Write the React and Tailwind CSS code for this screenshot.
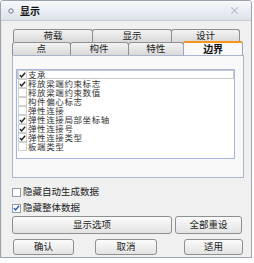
import React from 'react'

const font = { fontFamily: '"Noto Sans CJK SC", "Noto Sans", sans-serif' }

const items = [
  { label: '支承', on: true },
  { label: '释放梁端约束标志', on: true },
  { label: '释放梁端约束数值', on: false },
  { label: '构件偏心标志', on: false },
  { label: '弹性连接', on: false },
  { label: '弹性连接局部坐标轴', on: true },
  { label: '弹性连接号', on: true },
  { label: '弹性连接类型', on: true },
  { label: '板端类型', on: false },
]

function Check({ color = '#222' }) {
  return (
    <svg width="8" height="8" viewBox="0 0 8 8">
      <path d="M1 4 L3 6.2 L7 1.5" fill="none" stroke={color} strokeWidth="1.6" />
    </svg>
  )
}

function Button({ w, children }) {
  return (
    <button className={`${w} h-[16px] flex items-center justify-center rounded-[3px] border border-[#8e8f8f] bg-gradient-to-b from-[#fbfbfb] to-[#e3e3e3] text-[9.5px] leading-none text-[#222]`}>
      {children}
    </button>
  )
}

export default function App() {
  return (
    <div className="w-[254px] h-[263px] bg-white" style={font}>
      <div className="w-[252px] h-[258px] border border-[#9aa3ad] rounded-t-[3px] flex flex-col overflow-hidden">
        {/* Title bar */}
        <div className="h-[20px] shrink-0 flex items-center px-[7px] bg-gradient-to-b from-[#f7f9fb] to-[#dde3ea] border-b border-[#c5ccd4]">
          <svg width="6" height="6" viewBox="0 0 6 6" className="mr-[6px]">
            <circle cx="3" cy="3" r="2.2" fill="none" stroke="#777" strokeWidth="1" />
          </svg>
          <span className="text-[10px] font-bold text-[#111] leading-none">显示</span>
          <span className="ml-auto mr-[4px] text-[11px] leading-none text-[#a9b0b8]">×</span>
        </div>

        {/* Body */}
        <div className="flex-1 bg-[#f0f0f0] pl-[10px] pr-[8px] pt-[8px] flex flex-col border-l border-[#e5e5e5]">
          {/* Back tab row */}
          <div className="flex pl-[1px] h-[13px]">
            {[['荷载', 'w-[80px]'], ['显示', 'w-[80px]'], ['设计', 'w-[69px]']].map(([t, w]) => (
              <div key={t} className={`${w} h-[13px] -mr-[1px] border border-b-0 border-[#8e8f8f] rounded-t-[3px] bg-gradient-to-b from-[#f3f3f3] to-[#d9d9d9] flex items-center justify-center text-[9.5px] leading-none text-[#222]`}>
                {t}
              </div>
            ))}
          </div>
          {/* Front tab row */}
          <div className="flex h-[13px] relative z-10">
            {[['点', 'w-[59px]'], ['构件', 'w-[59px]'], ['特性', 'w-[57px]']].map(([t, w]) => (
              <div key={t} className={`${w} h-[13px] -mr-[1px] border border-b-0 border-[#8e8f8f] rounded-t-[3px] bg-gradient-to-b from-[#f3f3f3] to-[#d9d9d9] flex items-center justify-center text-[9.5px] leading-none text-[#222]`}>
                {t}
              </div>
            ))}
            <div className="w-[60px] h-[14px] -mt-[1px] border border-b-0 border-[#9aa3c0] border-t-2 border-t-[#f7941d] rounded-t-[2px] bg-[#f9f9f9] flex items-center justify-center text-[10px] font-bold leading-none text-[#111]">
              边界
            </div>
          </div>
          {/* Panel */}
          <div className="w-[232px] h-[123px] border border-[#aab4cc] bg-[#f9f9f9] pl-[3px] pt-[13px]">
            <div className="w-[219px] h-[90px] border border-[#a7b4dc] bg-white">
              {items.map((it, i) => (
                <div
                  key={it.label}
                  className={`h-[9px] flex items-center text-[8.5px] leading-[9px] tracking-[0.6px] text-[#333] ${i === 0 ? 'border border-[#c9c9c9]' : 'pl-[1px]'}`}
                >
                  <span className="w-[9px] h-[9px] shrink-0 border border-[#d0d0d0] bg-white flex items-center justify-center mr-[1px]">
                    {it.on && <Check />}
                  </span>
                  {it.label}
                </div>
              ))}
            </div>
          </div>

          {/* Checkboxes */}
          <div className="mt-[9px] flex items-center h-[10px] text-[9.5px] leading-none text-[#222]">
            <span className="w-[9px] h-[9px] border border-[#8e9bb0] bg-white mr-[2px]" />
            隐藏自动生成数据
          </div>
          <div className="mt-[6px] flex items-center h-[10px] text-[9.5px] leading-none text-[#222]">
            <span className="w-[9px] h-[9px] border border-[#8e9bb0] bg-white mr-[2px] flex items-center justify-center">
              <Check color="#2a56b8" />
            </span>
            隐藏整体数据
          </div>

          {/* Buttons */}
          <div className="mt-[3px] flex gap-[3px]">
            <Button w="w-[160px] h-[18px]">显示选项</Button>
            <Button w="w-[67px] h-[18px]">全部重设</Button>
          </div>
          <div className="mt-[5px] flex pl-[1px]">
            <Button w="w-[61px]">确认</Button>
            <div className="w-[21px]" />
            <Button w="w-[62px]">取消</Button>
            <div className="w-[27px]" />
            <Button w="w-[59px]">适用</Button>
          </div>
        </div>
      </div>
    </div>
  )
}
